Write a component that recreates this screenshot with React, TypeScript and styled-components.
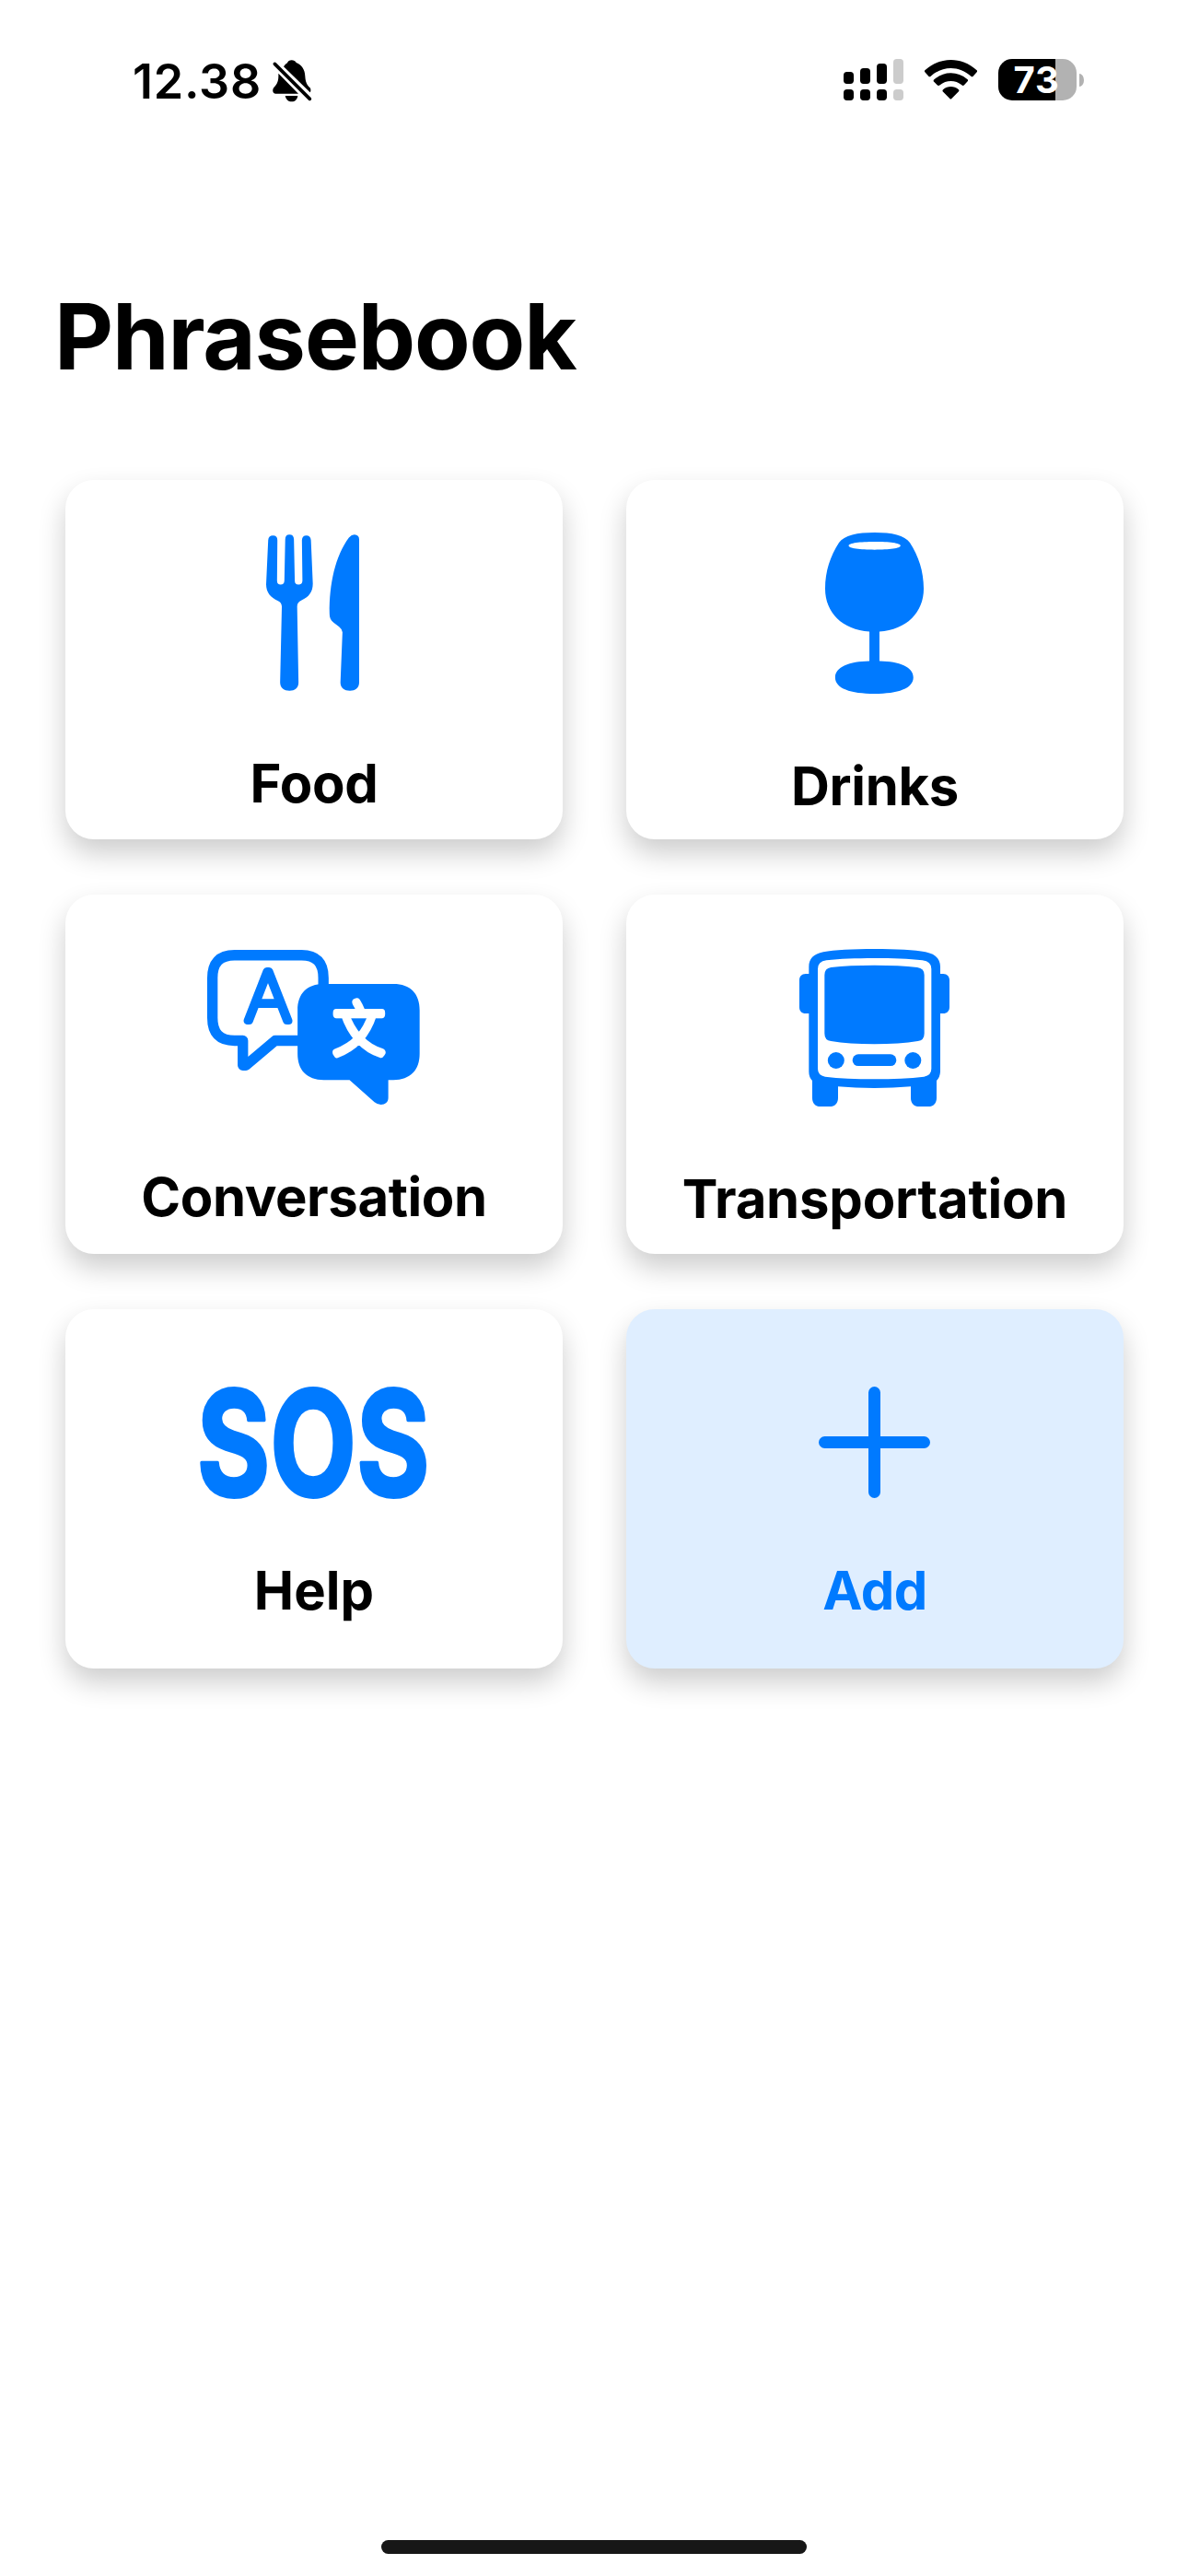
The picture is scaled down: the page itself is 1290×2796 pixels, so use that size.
import React from "react";
import styled, { createGlobalStyle } from "styled-components";

const BLUE = "#007aff";
const FONT = `"Inter", "Liberation Sans", sans-serif`;

const GlobalStyle = createGlobalStyle`
  * { box-sizing: border-box; }
  body { margin: 0; background: #fff; font-family: ${FONT}; color: #000; }
  svg { display: block; flex: none; overflow: visible; }
`;

const Screen = styled.div`
  display: flex;
  flex-direction: column;
  width: 1290px;
  min-height: 2796px;
  background: #fff;
`;

const StatusBar = styled.header`
  display: flex;
  justify-content: space-between;
  align-items: center;
  height: 176px;
  padding: 0 113px 0 144px;
`;

const StatusLeft = styled.div`
  display: flex;
  align-items: center;
  gap: 12px;
`;

const Clock = styled.time`
  padding-top: 2px;
  font-size: 52px;
  font-weight: 600;
  line-height: 60px;
  letter-spacing: 0.8px;
`;

const StatusRight = styled.div`
  display: flex;
  align-items: center;
  gap: 23px;
  padding-bottom: 3px;
`;

const Battery = styled.div`
  display: flex;
  align-items: center;
  gap: 3px;
`;

const BatteryBody = styled.div<{ $level: number }>`
  display: flex;
  align-items: center;
  justify-content: center;
  width: 85px;
  height: 45px;
  padding-right: 2px;
  border-radius: 15px;
  background: linear-gradient(
    to right,
    #000 ${(p) => p.$level}%,
    #b2b2b2 ${(p) => p.$level}%
  );
  color: #fff;
  font-size: 40px;
  font-weight: 700;
  line-height: 45px;
  letter-spacing: 0.8px;
`;

const BatteryTip = styled.div`
  width: 5px;
  height: 14px;
  border-radius: 0 5px 5px 0 / 0 7px 7px 0;
  background: #b2b2b2;
`;

const Title = styled.h1`
  margin: 129px 0 96px;
  padding: 0 59px;
  font-size: 99px;
  font-weight: 700;
  line-height: 120px;
  letter-spacing: -1.15px;
`;

const Grid = styled.main`
  display: grid;
  grid-template-columns: 540px 540px;
  grid-auto-rows: 390px;
  gap: 60px 69px;
  padding-left: 71px;
`;

const Tile = styled.button<{ $accent?: boolean }>`
  display: flex;
  flex-direction: column;
  align-items: center;
  justify-content: center;
  gap: 64px;
  padding: 34px 0 0;
  border: 0;
  border-radius: 31px;
  background: ${(p) => (p.$accent ? "#dfeeff" : "#fff")};
  color: ${(p) => (p.$accent ? BLUE : "#000")};
  box-shadow: 0 15px 30px rgba(0, 0, 0, 0.2);
  font-family: inherit;

  svg {
    margin-right: 1px;
  }
`;

const Label = styled.span<{ $tracking?: number }>`
  font-size: 58px;
  font-weight: 680;
  line-height: 72px;
  letter-spacing: ${(p) => p.$tracking ?? -0.3}px;
`;

const HomeIndicator = styled.div`
  width: 462px;
  height: 15px;
  margin: auto auto 24px;
  border-radius: 8px;
  background: #171717;
`;

const BellSlash = () => (
  <svg width="42" height="46" viewBox="527 75 126 138">
    <path d="M563 97C567 91 571 87 575 85C577 79 582 76 589 76C596 76 601 79 604 84C622 91 632 106 633 128C634 148 639 156 649 166C652 171 652 177 649 181Z" />
    <path d="M546 119C547 143 543 152 531 165C525 173 527 185 537 185H611Z" />
    <path d="M568 192H609C607 204 600 211 589 211C578 211 571 204 568 192Z" />
    <path d="M534 88L648 202" stroke="#000" strokeWidth="11" strokeLinecap="round" />
  </svg>
);

const Signal = () => (
  <svg width="65" height="45" viewBox="78 72 195 135">
    <rect x="78" y="114" width="33" height="39" rx="11" />
    <rect x="132" y="102" width="33" height="51" rx="11" />
    <rect x="186" y="87" width="33" height="66" rx="11" />
    <rect x="240" y="72" width="33" height="81" rx="11" fill="#ccc" />
    <rect x="78" y="171" width="33" height="36" rx="11" />
    <rect x="132" y="171" width="33" height="36" rx="11" />
    <rect x="186" y="171" width="33" height="36" rx="11" />
    <rect x="240" y="171" width="33" height="36" rx="11" fill="#ccc" />
  </svg>
);

const Wifi = () => (
  <svg width="57" height="43" viewBox="342 75 171 129">
    <path d="M343 115Q340 111 344 108C392 64 463 64 511 108Q515 111 512 115L500 128Q497 131 493 128C455 93 400 93 362 128Q358 131 355 128Z" />
    <path d="M371 145Q370 141 374 138C405 111 450 111 481 138Q485 141 482 145L471 157Q467 161 463 157C443 140 412 140 392 157Q387 161 383 157Z" />
    <path d="M402 172C417 159 438 159 453 172Q456 175 453 178L430 201Q427 204 424 201L401 178Q399 175 402 172Z" />
  </svg>
);

const ForkKnife = () => (
  <svg
    width="103"
    height="170"
    viewBox="647 239.5 278.4 510"
    preserveAspectRatio="none"
    fill={BLUE}
  >
    <path d="M653 258Q654 243 667 243Q680 243 680 258L679 390Q679 403 689.500 403Q700 403 700.500 390L703 256Q703 240 715.500 240Q728 240 728.500 256L731 390Q731 403 742 403Q753 403 753.500 390L752 258Q753 243 765 243Q777 243 778.500 258L784 400C784 428 772 443 751 454Q738 461 738 474L742 722C742 740 731 749 715.500 749C700 749 688 740 688 722L693 474Q692 461 682 456C660 445 647 428 647 402Z" />
    <path d="M920 256V722C920 740 908 749 893 749C877 749 865 740 865 722L871 558Q871 549 861 540L845 527C836 519 833 510 833 498C832 400 850 310 890 250Q898 240 906 240Q920 241 920 256Z" />
  </svg>
);

const WineGlass = () => (
  <svg
    width="107"
    height="175"
    viewBox="627 235 285 524"
    preserveAspectRatio="none"
    fill={BLUE}
  >
    <path
      fillRule="evenodd"
      d="M770 235C820 235 857 244 872 268C897 312 912 360 912 418C912 495 862 552 784 557V653C842 654 882 672 882 706C882 742 838 759 770 759C700 759 656 742 656 706C656 672 697 654 755 653V557C677 552 627 495 627 418C627 360 642 312 667 268C682 244 720 235 770 235ZM695 278C695 287 728 291 770 291C812 291 845 287 845 278C845 269 812 265 770 265C728 265 695 269 695 278Z"
    />
  </svg>
);

const Translate = () => (
  <svg width="231" height="168" viewBox="76 64 692 503" fill={BLUE}>
    <path
      d="M454 190V155C454 105 430 81 383 81H165C115 81 93 107 93 155V285C93 333 115 359 165 359H192V439H202L297 359H400"
      fill="none"
      stroke={BLUE}
      strokeWidth="34"
      strokeLinejoin="round"
    />
    <path d="M455 175H682C737 175 767 207 767 260V402C767 455 737 487 682 487H665V545C665 560 655 567 641 567Q630 567 620 559L539 487H455C400 487 370 455 370 402V260C370 207 400 175 455 175Z" />
    <g strokeLinejoin="round" strokeLinecap="round" textAnchor="middle">
      <text
        transform="translate(274 296) scale(1.05 1)"
        fontFamily="Inter, sans-serif"
        fontWeight="100"
        fontSize="221"
        stroke={BLUE}
        strokeWidth="24"
      >
        A
      </text>
      <text
        transform="translate(570 391) scale(1 1.13)"
        fontFamily="'Noto Sans CJK SC', sans-serif"
        fontWeight="100"
        fontSize="165"
        fill="#fff"
        stroke="#fff"
        strokeWidth="22"
      >
        文
      </text>
    </g>
  </svg>
);

const Bus = () => (
  <svg width="163" height="171" viewBox="84 60 489 513" fill={BLUE}>
    <path
      fillRule="evenodd"
      d="M328 60C400 60 460 63 495 70C528 77 543 92 543 118V141H552C566 141 573 150 573 162V249C573 262 566 270 552 270H543V460Q542 478 531 489V545C531 562 521 573 504 573H475C457 573 447 562 447 545V508Q390 513 328 513Q266 513 210 508V545C210 562 200 573 182 573H153C136 573 126 562 126 545V489Q115 478 115 460V270H105C91 270 84 262 84 249V162C84 150 91 141 105 141H115V118C115 92 130 77 162 70C197 63 260 60 328 60ZM328 90C266 90 217 92 172 97Q144 101 144 125V450Q144 472 168 476Q236 484 328 484Q420 484 490 476Q514 472 514 450V125Q514 101 485 97C440 92 390 90 328 90Z"
    />
    <path d="M328 113Q410 113 468 120Q491 123 491 145V335Q491 357 470 360Q410 370 328 370Q246 370 187 360Q166 357 166 335V145Q166 123 187 120Q246 113 328 113Z" />
    <circle cx="203.500" cy="423" r="27" />
    <circle cx="454" cy="423" r="27" />
    <rect x="257" y="403" width="143" height="38" rx="19" />
  </svg>
);

const Sos = () => (
  <svg width="247" height="122" viewBox="0 0 247 122" fill={BLUE}>
    <text
      transform="translate(-3.2 118.9) scale(0.769 1)"
      fontFamily="Inter, sans-serif"
      fontWeight="700"
      fontSize="158"
      stroke={BLUE}
      strokeWidth="3.4"
      strokeLinejoin="round"
      vectorEffect="non-scaling-stroke"
    >
      SOS
    </text>
  </svg>
);

const Plus = () => (
  <svg width="121" height="121" viewBox="0 0 121 121">
    <path
      d="M60.500 6.500V114.500M6.500 60.500H114.500"
      stroke={BLUE}
      strokeWidth="13"
      strokeLinecap="round"
    />
  </svg>
);

const categories = [
  { label: "Food", Icon: ForkKnife },
  { label: "Drinks", Icon: WineGlass },
  { label: "Conversation", Icon: Translate, tracking: -0.4 },
  { label: "Transportation", Icon: Bus, tracking: -0.2 },
  { label: "Help", Icon: Sos, tracking: 0.1 },
  { label: "Add", Icon: Plus, accent: true, tracking: -0.5 },
];

export default function App() {
  return (
    <>
      <GlobalStyle />
      <Screen>
        <StatusBar>
          <StatusLeft>
            <Clock>12.38</Clock>
            <BellSlash />
          </StatusLeft>
          <StatusRight>
            <Signal />
            <Wifi />
            <Battery>
              <BatteryBody $level={73}>73</BatteryBody>
              <BatteryTip />
            </Battery>
          </StatusRight>
        </StatusBar>
        <Title>Phrasebook</Title>
        <Grid>
          {categories.map(({ label, Icon, accent, tracking }) => (
            <Tile key={label} $accent={accent}>
              <Icon />
              <Label $tracking={tracking}>{label}</Label>
            </Tile>
          ))}
        </Grid>
        <HomeIndicator />
      </Screen>
    </>
  );
}
